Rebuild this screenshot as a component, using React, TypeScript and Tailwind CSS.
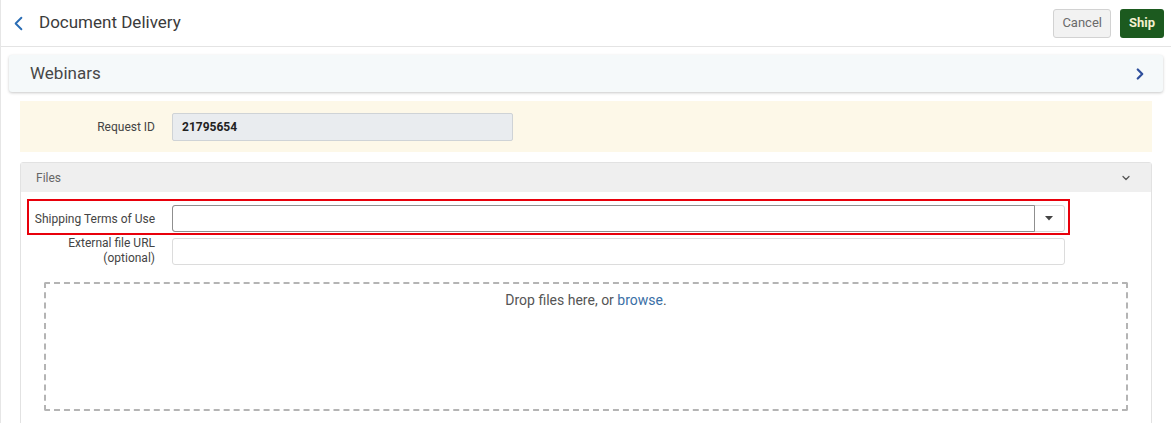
import { ChevronDown, ChevronLeft, ChevronRight } from "lucide-react";

const App = () => {
  return (
    <div
      className="w-[1171px] h-[423px] overflow-hidden bg-white border-l border-[#e6e6e6]"
      style={{ fontFamily: "Roboto, 'Liberation Sans', sans-serif" }}
    >
      {/* header */}
      <div className="h-[47px] flex items-center border-b border-[#e4e4e4] pl-[6px] pr-[7px]">
        <ChevronLeft className="w-[23px] h-[23px] text-[#2a6db5]" strokeWidth={2} />
        <h1 className="ml-[9px] text-[17px] text-[#3b3b3b]">Document Delivery</h1>
        <div className="ml-auto flex items-center gap-[9px]">
          <button className="h-[29px] px-[8px] rounded-[3px] border border-[#d2d2d2] bg-[#f2f2f2] text-[13px] text-[#6b6b6b]">
            Cancel
          </button>
          <button className="h-[29px] px-[9px] rounded-[3px] bg-[#1c5a1f] text-[13px] font-bold text-[#f3efcf]">
            Ship
          </button>
        </div>
      </div>

      {/* webinars bar */}
      <div className="mx-[8px] mt-[8px] h-[37px] flex items-center rounded-[3px] bg-[#f5f9fa] shadow-[0_1px_3px_rgba(0,0,0,0.22)] pl-[21px] pr-[14px]">
        <span className="text-[17px] text-[#474747]">Webinars</span>
        <ChevronRight className="ml-auto w-[18px] h-[18px] text-[#2f4f9c]" strokeWidth={3} />
      </div>

      <div className="ml-[19px] mr-[19px]">
        {/* request id */}
        <div className="mt-[9px] h-[51px] bg-[#fdf8e8] flex items-center">
          <span className="w-[135px] text-right text-[12px] text-[#444]">Request ID</span>
          <div className="ml-[17px] w-[341px] h-[28px] flex items-center px-[9px] bg-[#e9ecef] border border-[#cfd3d6] rounded-[2px] text-[12px] font-bold text-[#222]">
            21795654
          </div>
        </div>

        {/* files panel */}
        <div className="mt-[10px] border border-[#e2e2e2] rounded-t-[3px] h-[300px]">
          <div className="h-[29px] bg-[#efefef] flex items-center pl-[15px] pr-[19px]">
            <span className="text-[12px] text-[#666]">Files</span>
            <ChevronDown className="ml-auto w-[12px] h-[12px] text-[#555]" strokeWidth={2.5} />
          </div>

          <div className="ml-[6px] mt-[7px] w-[1043px] h-[36px] border-2 border-[#e8000b] flex items-center pt-[3px]">
            <span className="w-[126px] text-right text-[12px] text-[#444]">Shipping Terms of Use</span>
            <div className="ml-[17px] w-[893px] h-[27px] flex rounded-[3px] border border-[#d6d6d6]">
              <div className="flex-1 border border-[#8f8f8f] -m-px rounded-l-[3px]" />
              <div className="w-[30px] flex items-center justify-center">
                <svg width="8" height="5" viewBox="0 0 8 5">
                  <path d="M0 0h8L4 4.5z" fill="#444" />
                </svg>
              </div>
            </div>
          </div>

          <div className="ml-[8px] mt-[1px] flex items-center">
            <span className="w-[126px] text-right text-[12px] leading-[15px] text-[#444]">
              External file URL
              <br />
              (optional)
            </span>
            <div className="ml-[17px] w-[893px] h-[27px] rounded-[3px] border border-[#dcdcdc]" />
          </div>

          <div className="mx-[23px] mt-[16px] h-[129px] border-2 border-dashed border-[#b4b4b4] rounded-[2px] pt-[6px] text-center text-[14px] text-[#555]">
            Drop files here, or <span className="text-[#3a6fa6]">browse</span>.
          </div>
        </div>
      </div>
    </div>
  );
};

export default App;
